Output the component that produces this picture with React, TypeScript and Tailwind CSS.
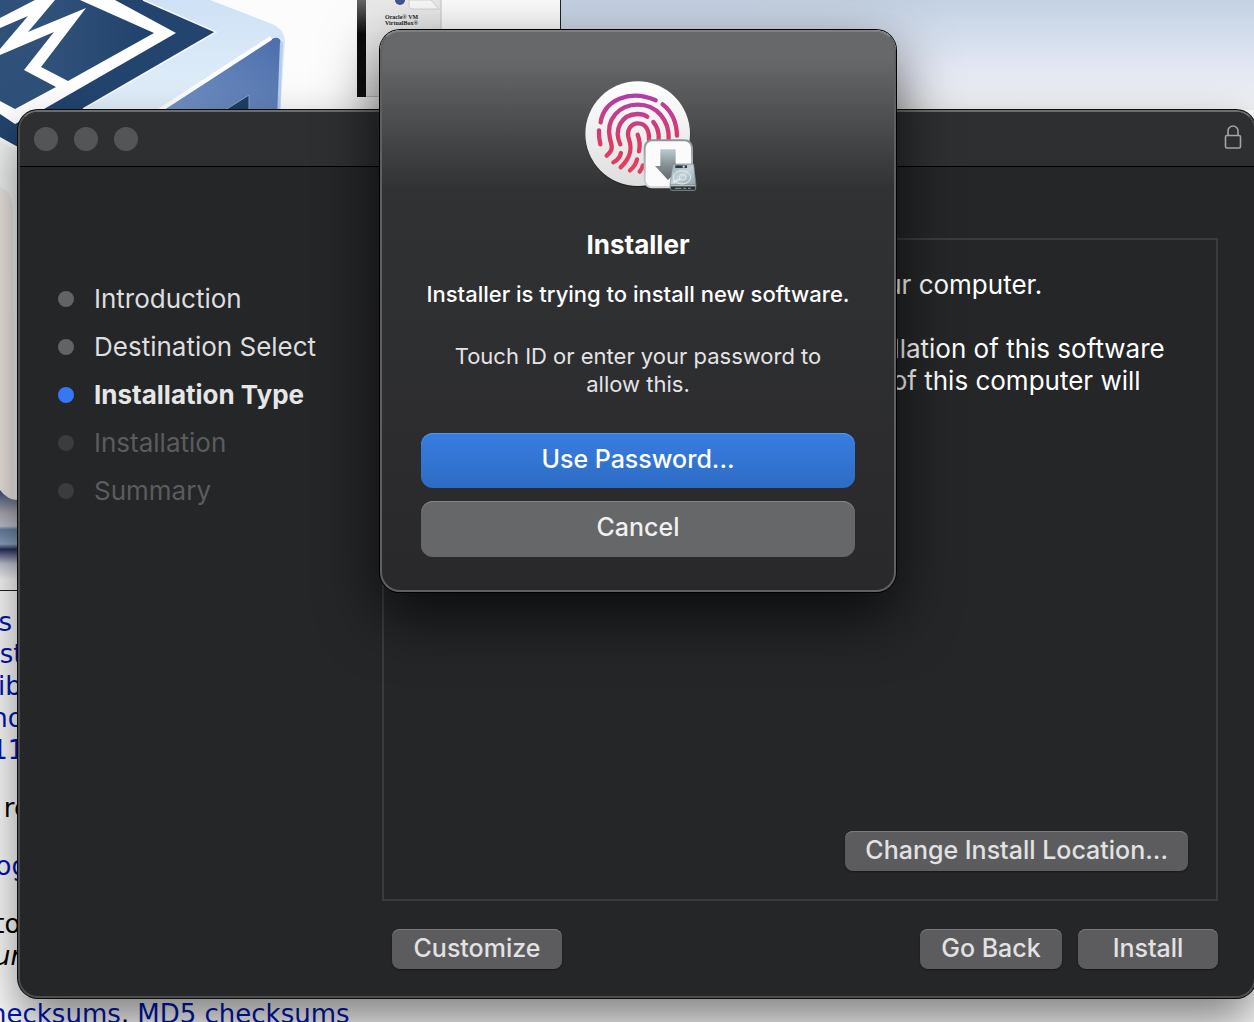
import React from "react";

type StepState = "done" | "current" | "pending";

const steps: { label: string; state: StepState }[] = [
  { label: "Introduction", state: "done" },
  { label: "Destination Select", state: "done" },
  { label: "Installation Type", state: "current" },
  { label: "Installation", state: "pending" },
  { label: "Summary", state: "pending" },
];

const dotStyle: Record<StepState, string> = {
  done: "bg-[#626365]",
  current: "bg-[#3478f6]",
  pending: "bg-[#3b3c3e]",
};

const labelStyle: Record<StepState, string> = {
  done: "text-[#dededf]",
  current: "font-bold text-[#e6e6e6]",
  pending: "text-[#5b5c5e]",
};

function DiskImageArt() {
  return (
    <svg viewBox="0 0 560 590" className="block h-[590px] w-[560px]" aria-hidden="true">
      <defs>
        <linearGradient id="cubeTop" x1="0" y1="0" x2="0" y2="1">
          <stop offset="0" stopColor="#cfe1f6" />
          <stop offset="1" stopColor="#e6f3fb" />
        </linearGradient>
        <linearGradient id="cubeSide" x1="1" y1="0" x2="0" y2="1">
          <stop offset="0" stopColor="#4d6dab" />
          <stop offset="1" stopColor="#7897c9" />
        </linearGradient>
        <linearGradient id="navy" x1="0" y1="0" x2="1" y2="0">
          <stop offset="0" stopColor="#33557d" />
          <stop offset="1" stopColor="#20416b" />
        </linearGradient>
        <linearGradient id="spine" x1="0" y1="0" x2="0" y2="1">
          <stop offset="0" stopColor="#666" />
          <stop offset="0.35" stopColor="#0a0a0a" />
          <stop offset="1" stopColor="#111" />
        </linearGradient>
        <linearGradient id="foot" x1="0" y1="0" x2="0" y2="1">
          <stop offset="0" stopColor="#3d4b73" />
          <stop offset="0.25" stopColor="#a9a9b4" />
          <stop offset="0.4" stopColor="#c4c4d0" />
          <stop offset="0.44" stopColor="#66809f" />
          <stop offset="0.6" stopColor="#8fa3c4" />
          <stop offset="0.66" stopColor="#262f5c" />
          <stop offset="0.82" stopColor="#c4c7d6" />
          <stop offset="1" stopColor="#fcfcfc" />
        </linearGradient>
      </defs>
      <rect width="560" height="590" fill="#fcfcfc" />
      <path d="M0 0H210L272 24Q285 30 285 42L279 130H0Z" fill="url(#cubeTop)" />
      <path d="M150 118L272 39Q281 35 281 45L278 118Z" fill="url(#cubeSide)" />
      <path d="M148 118L271 38" stroke="#fff" strokeWidth="4" />
      <path d="M281.500 42L278.500 118" stroke="#b9cdeb" strokeWidth="3" />
      <path d="M222 112L249 95V112Z" fill="#1f3f69" stroke="#8da4c8" strokeWidth="1" />
      <path d="M0 0H143L216 32L83 109L18 147L0 137Z" fill="#22446f" />
      <path d="M143 0L216 32L83 109" fill="none" stroke="#f4f9fd" strokeWidth="1.500" />
      <path d="M0 0H115L176 33L44 109L15 124L0 114Z" fill="#fff" />
      <path d="M80 0L154 33L68 81L41 67L86 8L28 32L55 0Z" fill="url(#navy)" />
      <path d="M0 55L54 32L24 70L56 87L15 109L0 101Z" fill="#2f5179" />
      <path d="M0 0H35L0 18Z" fill="#2f5179" />
      <path d="M0 28L28 16L0 49Z" fill="#2f5179" />
      <path d="M0 141L20 152V560H0Z" fill="#f2f4f4" />
      <path d="M0 187Q11 191 13 206L14 500H0Z" fill="#efe8e3" />
      <path d="M0 490Q8 501 20 500V580H0Z" fill="url(#foot)" />

      <rect x="357" y="0" width="9" height="97" fill="url(#spine)" />
      <rect x="366" y="0" width="75" height="96" fill="#e9e9e9" />
      <path d="M366 96.500H441V0" fill="none" stroke="#c4c4c4" />
      <circle cx="400" cy="0" r="5" fill="#41548f" />
      <path d="M409 0V6Q409 9 414 9H439L431 0Z" fill="#f8f8f8" stroke="#c9c9c9" strokeWidth="0.800" />
      <g fontFamily="'Liberation Serif', serif" fontWeight="700" fontSize="6" fill="#222">
        <text x="385" y="19">Oracle® VM</text>
        <text x="385" y="25">VirtualBox®</text>
      </g>
    </svg>
  );
}

function TouchIdIcon() {
  return (
    <svg viewBox="0 0 408 390" className="h-[130px] w-[136px]" role="img" aria-label="Touch ID">
      <defs>
        <linearGradient id="disc" x1="0" y1="0" x2="0" y2="1">
          <stop offset="0" stopColor="#ffffff" />
          <stop offset="1" stopColor="#dedede" />
        </linearGradient>
        <linearGradient id="ridge" gradientUnits="userSpaceOnUse" x1="0" y1="70" x2="0" y2="310">
          <stop offset="0" stopColor="#b03ca8" />
          <stop offset="0.3" stopColor="#c83e88" />
          <stop offset="0.6" stopColor="#d93a64" />
          <stop offset="1" stopColor="#e5405f" />
        </linearGradient>
        <linearGradient id="arrow" x1="0" y1="0" x2="0" y2="1">
          <stop offset="0" stopColor="#bccbd0" />
          <stop offset="0.5" stopColor="#879196" />
          <stop offset="1" stopColor="#62686b" />
        </linearGradient>
        <linearGradient id="plate" x1="0" y1="0" x2="0" y2="1">
          <stop offset="0" stopColor="#8d9599" />
          <stop offset="1" stopColor="#d2d6d8" />
        </linearGradient>
        <linearGradient id="drive" x1="0" y1="0" x2="1" y2="1">
          <stop offset="0" stopColor="#99a8ae" />
          <stop offset="0.5" stopColor="#c5d4da" />
          <stop offset="1" stopColor="#8f9ea5" />
        </linearGradient>
      </defs>
      <circle cx="203" cy="194" r="158" fill="#000" opacity="0.300" />
      <circle cx="203" cy="191" r="157" fill="url(#disc)" />
      <g fill="none" stroke="url(#ridge)" strokeWidth="13" strokeLinecap="round">
        <path d="M92 157C102 92 178 56 257 91" />
        <path d="M278 103C306 125 320 158 321 197" />
        <path d="M87 181C86 196 88 210 91 223" />
        <path d="M110 257C130 240 127 230 120 207C106 148 148 104 203 104C260 104 298 150 296 207" />
        <path d="M151 223C131 181 152 133 203 132C215 132 225 135 232 140" />
        <path d="M250 156C263 171 267 189 266 207" />
        <path d="M152 292C180 265 188 240 177 208C167 180 184 160 204 160C230 160 238 185 237 210" />
        <path d="M203 194C210 212 210 230 207 244" />
        <path d="M153 249C150 262 142 271 130 277" />
        <path d="M201 268C198 282 190 293 180 301" />
        <path d="M219 286C217 294 214 299 209 305" />
      </g>
      <rect x="224" y="211" width="142" height="141" rx="22" fill="#fbfbfb" stroke="url(#plate)" strokeWidth="6" />
      <path d="M271 238H317V288H334L294 330L255 288H271Z" fill="url(#arrow)" />
      <path d="M308 282H371L378 346H300Z" fill="url(#drive)" stroke="#75838a" strokeWidth="2" />
      <path d="M301 345H377V358Q377 361 373 361H305Q301 361 301 358Z" fill="#2c3235" stroke="#7d898e" strokeWidth="3" />
      <path d="M302 347H376" stroke="#b3c0c5" strokeWidth="4" />
      <path d="M315 355H334M340 355H348M354 355H362" stroke="#8fa39a" strokeWidth="3" />
      <rect x="316" y="286" width="35" height="8" fill="#30383d" />
      <rect x="338" y="287" width="6" height="6" fill="#dfe7ea" />
      <ellipse cx="336" cy="322" rx="26" ry="20" fill="none" stroke="#e4edf0" strokeWidth="3" />
      <ellipse cx="338" cy="322" rx="10" ry="8" fill="none" stroke="#e4edf0" strokeWidth="3" />
      <path d="M309 337L331 327" stroke="#edf3f5" strokeWidth="4" />
    </svg>
  );
}

function LockIcon() {
  return (
    <svg viewBox="0 0 18 24" className="mb-1 h-6 w-[18px]" fill="none" stroke="#a3a4a6" strokeWidth="1.600" role="img" aria-label="Locked">
      <rect x="1.500" y="10.500" width="15" height="12.500" rx="1.500" />
      <path d="M4 10.500V6a5 5 0 0 1 10 0V10.500" />
    </svg>
  );
}

function PushButton({ children, className = "" }: { children: React.ReactNode; className?: string }) {
  return (
    <button
      type="button"
      className={
        "h-10 rounded-lg bg-[#5c5c5e] pb-0.5 text-[25px] leading-9 font-medium whitespace-nowrap text-[#e2e2e3] shadow-[inset_0_1px_0_#7b7b7d,0_1px_2px_rgba(0,0,0,0.4)] " +
        className
      }
    >
      {children}
    </button>
  );
}

function DownloadsPage() {
  return (
    <div className="absolute top-[606px] -left-[215px] w-[1100px] font-['DejaVu_Sans',sans-serif] text-[26px] leading-8 text-black">
      <ul className="mb-[26px] pl-[111px] text-[#0016b4]">
        <li><a href="#windows">Windows hosts</a></li>
        <li><a href="#osx">OS X hosts</a></li>
        <li><a href="#linux">VB distributions</a></li>
        <li><a href="#solaris">Solaris hosts</a></li>
        <li><a href="#solaris11">Solaris 11 hosts</a></li>
      </ul>
      <p className="mb-[26px]">The binaries are released</p>
      <p className="mb-[26px]">
        <a href="#changelog" className="text-[#0016b4]">See the changelog</a>
      </p>
      <p className="mb-[26px]">
        You might want to compare
        <br />
        <em>treated as insecure!</em>
      </p>
      <p className="pl-[79px]">
        <a href="#sha256" className="text-[#0016b4]">SHA256 checksums</a>
        {", "}
        <a href="#md5" className="text-[#0016b4]">MD5 checksums</a>
      </p>
    </div>
  );
}

function InstallerWindow() {
  return (
    <section
      aria-label="Install"
      className="absolute top-[110px] -right-0.5 bottom-6 left-[18px] flex flex-col overflow-hidden rounded-[20px] border-2 border-[#4c4d4f] border-t-[#6c6d6e] bg-[#252628] shadow-[0_0_0_1px_#0c0c0c,0_24px_50px_rgba(0,0,0,0.5)]"
    >
      <header className="flex h-[55px] shrink-0 items-center justify-between border-b border-black bg-[#2e2f31] pr-3 pl-3.5">
        <div className="flex gap-4">
          <button type="button" aria-label="Close" className="size-6 rounded-full bg-[#545557]" />
          <button type="button" aria-label="Minimize" className="size-6 rounded-full bg-[#545557]" />
          <button type="button" aria-label="Zoom" className="size-6 rounded-full bg-[#545557]" />
        </div>
        <LockIcon />
      </header>
      <div className="flex grow">
        <ol className="flex w-[362px] shrink-0 flex-col pt-[108px] pl-[38px]">
          {steps.map((s) => (
            <li key={s.label} className="flex h-12 items-center gap-5">
              <span className={"size-4 rounded-full " + dotStyle[s.state]} />
              <span className={"text-[26px] leading-8 " + labelStyle[s.state]}>{s.label}</span>
            </li>
          ))}
        </ol>
        <div className="flex grow flex-col pt-[71px] pr-9 pb-[27px]">
          <div className="flex grow flex-col justify-between border-2 border-[#3b3c3e] pt-[29px] pr-7 pb-7 pl-[29px]">
            <div className="text-[26px] leading-8 whitespace-nowrap text-white">
              <p className="mb-8">This will take 788.9 MB of space on your computer.</p>
              <p>
                Click Install to perform a standard installation of this software
                <br />
                for all users of this computer. All users of this computer will
                <br />
                be able to use this software.
              </p>
            </div>
            <div className="flex justify-end">
              <PushButton className="px-5">Change Install Location...</PushButton>
            </div>
          </div>
          <div className="mt-7 flex gap-4 pl-2.5">
            <PushButton className="mr-auto w-[170px]">Customize</PushButton>
            <PushButton className="w-[142px]">Go Back</PushButton>
            <PushButton className="w-[140px]">Install</PushButton>
          </div>
        </div>
      </div>
    </section>
  );
}

function AuthDialog() {
  return (
    <div className="absolute inset-x-0 top-[30px] flex justify-center pl-[22px]">
      <div
        role="dialog"
        aria-labelledby="auth-title"
        className="flex w-[516px] flex-col items-center rounded-[20px] border-2 border-[#5f6061] border-t-[#7e7f80] bg-linear-to-b from-[#67686a] from-5% via-[#313234] via-28% to-[#29292c] px-[39px] pt-[38px] pb-[33px] text-center text-white shadow-[0_0_0_1px_#000,0_24px_60px_rgba(0,0,0,0.7)]"
      >
        <TouchIdIcon />
        <h1 id="auth-title" className="mt-[27px] text-[26px] leading-9 font-bold">Installer</h1>
        <p className="mt-[17px] text-[22px] leading-7 font-medium whitespace-nowrap">
          Installer is trying to install new software.
        </p>
        <p className="mt-[34px] text-[22px] leading-7 text-[#e4e4e5]">
          Touch ID or enter your password to
          <br />
          allow this.
        </p>
        <button
          type="button"
          className="mt-[35px] h-[55px] w-full rounded-xl bg-linear-to-b from-[#387de2] to-[#2d6cc4] pb-0.5 text-[25px] font-medium text-white shadow-[inset_0_1px_0_#5b93e6]"
        >
          Use Password...
        </button>
        <button
          type="button"
          className="mt-[13px] h-14 w-full rounded-xl bg-[#666769] pb-0.5 text-[25px] font-medium text-[#f0f0f1] shadow-[inset_0_1px_0_#858587]"
        >
          Cancel
        </button>
      </div>
    </div>
  );
}

export default function App() {
  return (
    <main className="relative h-screen min-h-[1022px] w-full overflow-hidden bg-white font-[Inter,sans-serif]">
      <div className="h-[110px] bg-linear-to-b from-[#c3d1e3] via-[#e2e7f3] via-60% to-[#f1f2f4]" />
      <DownloadsPage />
      <div className="absolute top-0 left-0 border-r border-b border-[#222]">
        <DiskImageArt />
      </div>
      <InstallerWindow />
      <AuthDialog />
    </main>
  );
}
